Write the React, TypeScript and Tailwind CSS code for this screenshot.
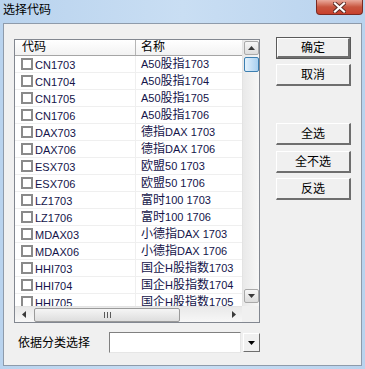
import React from "react";

const rows: [string, string][] = [
  ["CN1703", "A50股指1703"],
  ["CN1704", "A50股指1704"],
  ["CN1705", "A50股指1705"],
  ["CN1706", "A50股指1706"],
  ["DAX703", "德指DAX 1703"],
  ["DAX706", "德指DAX 1706"],
  ["ESX703", "欧盟50 1703"],
  ["ESX706", "欧盟50 1706"],
  ["LZ1703", "富时100 1703"],
  ["LZ1706", "富时100 1706"],
  ["MDAX03", "小德指DAX 1703"],
  ["MDAX06", "小德指DAX 1706"],
  ["HHI703", "国企H股指数1703"],
  ["HHI704", "国企H股指数1704"],
  ["HHI705", "国企H股指数1705"],
];

function Txt({ s }: { s: string }) {
  const parts = s.split(/([\u4e00-\u9fff]+)/).filter((p) => p.length > 0);
  return (
    <>
      {parts.map((p, i) =>
        /[\u4e00-\u9fff]/.test(p) ? (
          <span key={i} className="text-[12px]">
            {p}
          </span>
        ) : (
          <span key={i} className="text-[11px]">
            {p}
          </span>
        )
      )}
    </>
  );
}

function Btn({ label, def }: { label: string; def?: boolean }) {
  return (
    <div
      className={
        def
          ? "w-[75px] h-[22px] border border-[#5a5a5a] bg-[#f0f0f0] flex"
          : "w-[75px] h-[22px] flex"
      }
    >
      <div className="flex-1 flex items-center justify-center border-t border-l border-t-[#ffffff] border-l-[#ffffff] border-b-2 border-r-2 border-b-[#6e6e6e] border-r-[#6e6e6e] bg-[#f0f0f0] text-[12px] text-black leading-none">
        {label}
      </div>
    </div>
  );
}

function ArrowBtn({ dir }: { dir: "up" | "down" }) {
  return (
    <div className="w-[15px] h-[14px] mx-auto rounded-[2px] border border-[#a9a9a9] bg-gradient-to-b from-[#f7f7f7] to-[#dcdcdc] flex items-center justify-center">
      <svg width="7" height="4" viewBox="0 0 7 4">
        {dir === "up" ? (
          <path d="M0 4 L3.5 0 L7 4 Z" fill="#3a3a3a" />
        ) : (
          <path d="M0 0 L3.5 4 L7 0 Z" fill="#3a3a3a" />
        )}
      </svg>
    </div>
  );
}

export default function App() {
  return (
    <div
      className="w-[365px] h-[369px] overflow-hidden bg-gradient-to-r from-[#b9d3ee] via-[#c9def3] to-[#b9d3ee] text-black"
      style={{ fontFamily: '"Liberation Sans", "Noto Sans CJK SC", sans-serif' }}
    >
      {/* Title bar */}
      <div className="h-[23px] flex items-start justify-between">
        <div className="pl-[3px] pt-[3px] text-[12px] leading-[14px] text-black">选择代码</div>
        <div className="mr-[2px] w-[47px] h-[15px] rounded-b-[4px] border border-t-0 border-[#7a2a22] bg-gradient-to-b from-[#e9a99c] via-[#c8553f] to-[#c8402c] flex items-center justify-center">
          <svg width="13" height="11" viewBox="0 0 13 11">
            <path d="M2 1.5 L11 9.5 M11 1.5 L2 9.5" stroke="#5a2a24" strokeWidth="4" strokeLinecap="square" />
            <path d="M2 1.5 L11 9.5 M11 1.5 L2 9.5" stroke="#ffffff" strokeWidth="2.2" strokeLinecap="square" />
          </svg>
        </div>
      </div>

      {/* Client area */}
      <div className="mx-[3px] h-[343px] border border-[#8e9bab] bg-[#f0f0f0] pl-[10px] pt-[13px]">
        <div className="flex">
          {/* List */}
          <div className="mt-[2px] w-[246px] h-[284px] border border-[#828790] bg-white grid grid-cols-[227px_17px] grid-rows-[266px_16px]">
            {/* content */}
            <div className="overflow-hidden flex flex-col">
              <div className="h-[16px] shrink-0 flex border-b border-[#a5a5a5] bg-gradient-to-b from-[#ffffff] to-[#f2f2f2] text-[12px] leading-[15px]">
                <div className="w-[121px] pl-[7px] border-r border-[#b5b5b5]">代码</div>
                <div className="flex-1 pl-[5px]">名称</div>
              </div>
              <div className="flex-1 overflow-hidden">
                {rows.map(([code, name]) => (
                  <div key={code} className="h-[17px] flex border-b border-[#efefef] text-[#14144a] leading-[16px]">
                    <div className="w-[121px] pl-[6px] flex items-center border-r border-[#efefef]">
                      <div className="w-[12px] h-[12px] border-2 border-[#8a8a8a] bg-white shrink-0" />
                      <div className="ml-[2px] whitespace-nowrap">
                        <Txt s={code} />
                      </div>
                    </div>
                    <div className="flex-1 pl-[5px] flex items-center whitespace-nowrap">
                      <Txt s={name} />
                    </div>
                  </div>
                ))}
              </div>
            </div>
            {/* vertical scrollbar */}
            <div className="bg-gradient-to-r from-[#e9e9e9] to-[#f7f7f7] border-l border-[#e3e3e3] flex flex-col pt-[1px] pb-[3px]">
              <ArrowBtn dir="up" />
              <div className="mt-[2px] w-[15px] h-[15px] mx-auto rounded-[2px] border border-[#3c7fb1] bg-gradient-to-r from-[#e3f1fc] to-[#a9d0f0]" />
              <div className="flex-1" />
              <ArrowBtn dir="down" />
            </div>
            {/* horizontal scrollbar */}
            <div className="bg-gradient-to-b from-[#e9e9e9] to-[#f7f7f7] border-t border-[#e3e3e3] flex items-center">
              <div className="w-[17px] flex items-center justify-center">
                <svg width="4" height="7" viewBox="0 0 4 7">
                  <path d="M4 0 L0 3.5 L4 7 Z" fill="#3a3a3a" />
                </svg>
              </div>
              <div className="ml-[2px] w-[146px] h-[14px] rounded-[2px] border border-[#9a9a9a] bg-gradient-to-b from-[#f5f5f5] to-[#dedede] flex items-center justify-center">
                <svg width="7" height="6" viewBox="0 0 7 6">
                  <path d="M0.5 0 V6 M3.5 0 V6 M6.5 0 V6" stroke="#5a5a5a" strokeWidth="1" />
                </svg>
              </div>
              <div className="flex-1" />
              <div className="w-[17px] flex items-center justify-center">
                <svg width="4" height="7" viewBox="0 0 4 7">
                  <path d="M0 0 L4 3.5 L0 7 Z" fill="#3a3a3a" />
                </svg>
              </div>
            </div>
            <div className="bg-[#f0f0f0]" />
          </div>

          {/* Buttons */}
          <div className="ml-[16px] flex flex-col">
            <Btn label="确定" def />
            <div className="h-[5px]" />
            <Btn label="取消" />
            <div className="h-[37px]" />
            <Btn label="全选" />
            <div className="h-[6px]" />
            <Btn label="全不选" />
            <div className="h-[5px]" />
            <Btn label="反选" />
          </div>
        </div>

        {/* Bottom row */}
        <div className="mt-[9px] flex items-center">
          <div className="ml-[4px] w-[91px] text-[12px] leading-[14px]">依据分类选择</div>
          <div className="w-[132px] h-[21px] border border-t-[#808080] border-l-[#808080] border-b-[#e6e6e6] border-r-[#e6e6e6] bg-white" />
          <div className="ml-[2px] w-[17px] h-[19px] border border-t-[#ffffff] border-l-[#ffffff] border-b-[#6e6e6e] border-r-[#6e6e6e] bg-[#f0f0f0] flex items-center justify-center">
            <svg width="7" height="4" viewBox="0 0 7 4">
              <path d="M0 0 L3.5 4 L7 0 Z" fill="#000000" />
            </svg>
          </div>
        </div>
      </div>
    </div>
  );
}
